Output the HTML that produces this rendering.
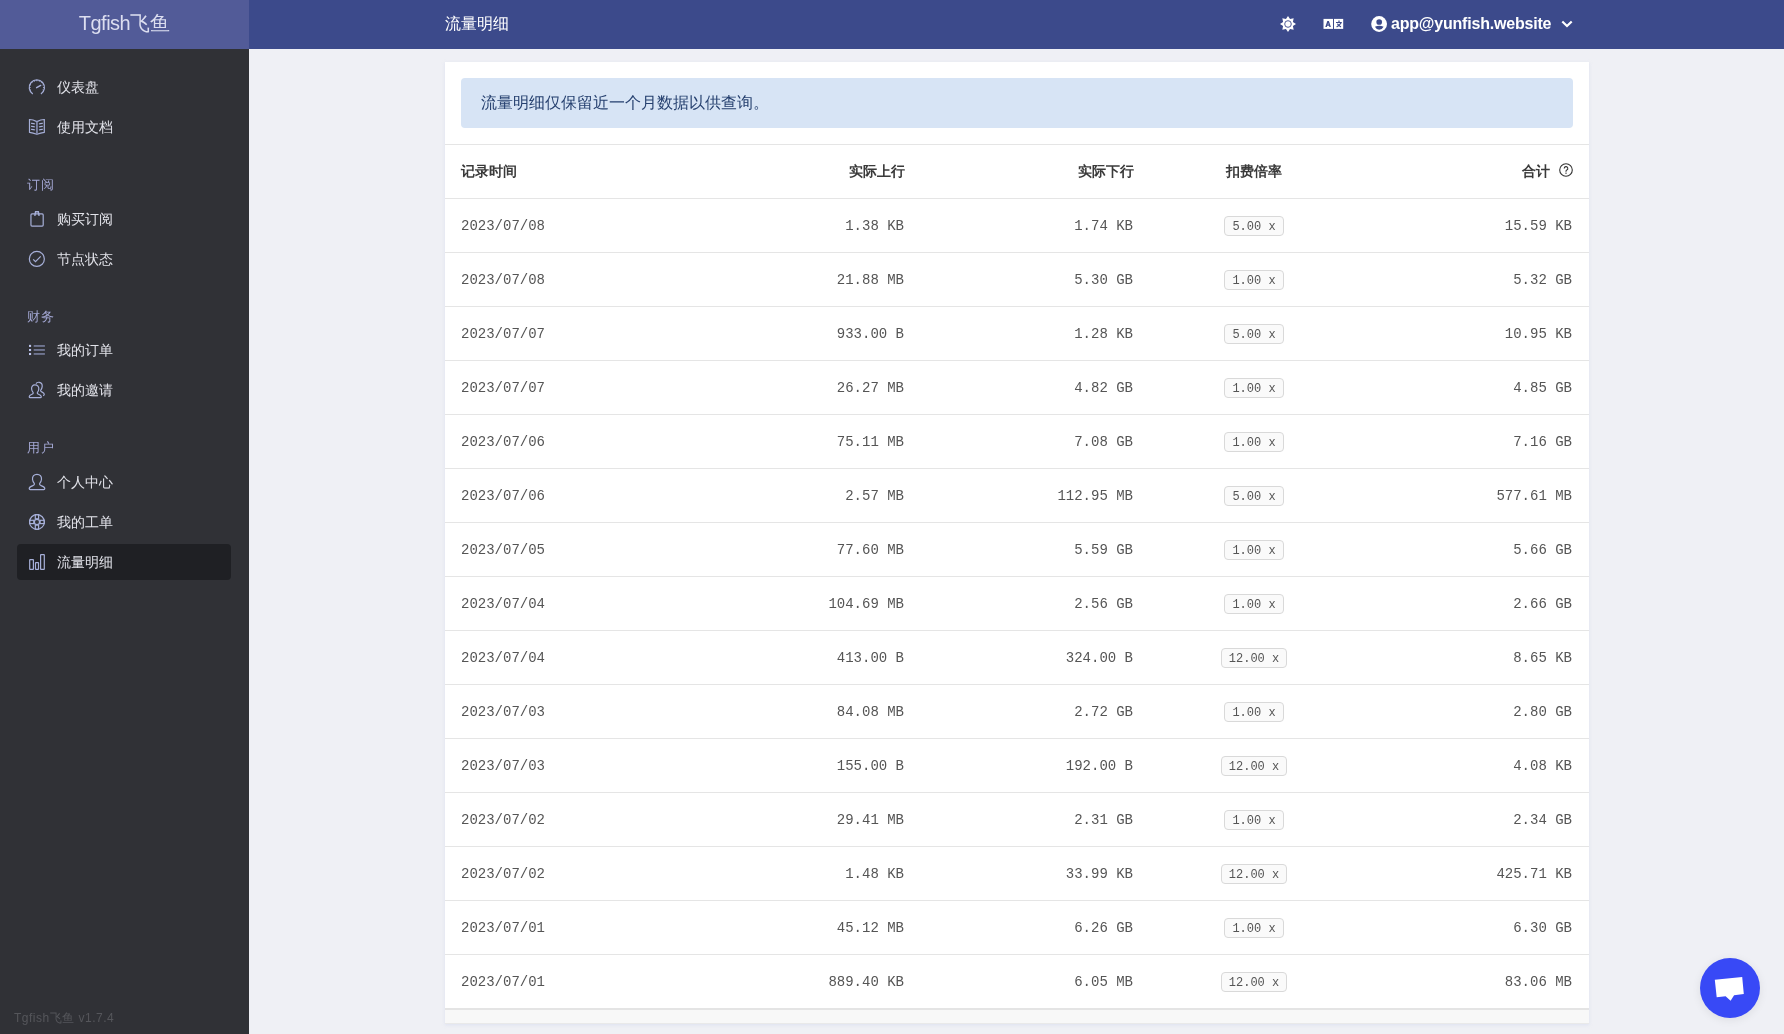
<!DOCTYPE html>
<html><head><meta charset="utf-8">
<style>
*{box-sizing:border-box;margin:0;padding:0}
html,body{will-change:transform;width:1784px;height:1034px;overflow:hidden;background:#eff0f5;font-family:"Liberation Sans",sans-serif;}
#sidebar{position:absolute;left:0;top:0;width:249px;height:1034px;background:#303136;}
#logo{position:absolute;left:0;top:0;width:249px;height:49px;background:#525b98;color:#dcdef0;font-size:20px;line-height:47px;text-align:center;}
#header{position:absolute;left:249px;top:0;width:1535px;height:49px;background:#3c4a8b;}
#email{position:absolute;left:1142px;top:0;line-height:47px;font-size:16px;font-weight:bold;color:#fff;letter-spacing:-0.2px}
#title{position:absolute;left:196px;top:0;line-height:47px;font-size:16px;color:#fff;}
.nav{position:absolute;left:17px;width:214px;height:36px;border-radius:4px;}
.nav.active{background:#1f2024;}
.nav svg{position:absolute;left:9px;top:7px;width:22px;height:22px;}
.nav span{position:absolute;left:40px;top:0;line-height:36px;font-size:14px;color:#e2e3ea;}
.heading{position:absolute;left:27px;font-size:13px;letter-spacing:0.5px;color:#a3a7d3;line-height:14px;}
#ver{position:absolute;left:14px;top:1011px;font-size:12px;letter-spacing:.5px;color:#55565b;line-height:14px;}
#card{position:absolute;left:445px;top:62px;width:1144px;height:962px;background:#fff;box-shadow:0 1px 3px rgba(205,212,238,.5);}
#alert{position:absolute;left:16px;top:16px;width:1112px;height:50px;background:#d7e4f5;border-radius:4px;color:#26406f;font-size:16px;line-height:49px;padding-left:20px;}
.thead,.row{position:absolute;left:0;width:1144px;height:54px;border-top:1px solid #e5e5e5;}
.thead{top:82px;font-size:14px;color:#3a3a3a;font-weight:600;}
.thead>div{margin-top:-1px}
.row{font-family:"Liberation Mono",monospace;font-size:14px;color:#555;}
.thead>div,.row>div{position:absolute;top:0;line-height:54px;white-space:nowrap;}
.c0{left:16px}.row .c1{right:685px}.row .c2{right:456px}.thead .c1{right:684px}.thead .c2{right:455px}.c3{left:709px;width:200px;text-align:center}.row .c4{right:17px}
.thead .c4{right:16px;padding-right:23px}
.q{position:absolute;right:0;top:19px}
.badge{display:inline-block;vertical-align:middle;position:relative;top:0px;height:20px;line-height:21px;padding:0 7px;border:1px solid #d9d9d9;border-radius:4px;background:#fafafa;font-size:12px;color:#555;}
#foot{position:absolute;left:0;top:946px;width:1144px;height:16px;background:#f8f8f8;border-top:2px solid #e4e4e4;border-bottom:1px solid #e9e9e9;}
#chat{position:absolute;left:1700px;top:958px;width:60px;height:60px;border-radius:50%;background:#3849f6;box-shadow:0 2px 10px rgba(0,0,0,.08);}
</style></head><body>
<div id="sidebar">
  <div id="logo"><span style="letter-spacing:-0.5px">Tgfish</span>飞鱼</div>
  <div class="nav" style="top:69px"><svg viewBox="0 0 22 22" width="22" height="22" fill="none" stroke="#a6afd8" stroke-width="1.2"><path d="M6.8 17.9A7.6 7.6 0 1 1 14.9 17.9"/><path d="M3.83 14.41L5.03 13.91M3.25 11.50L4.55 11.50M3.83 8.59L5.03 9.09M5.48 6.13L6.40 7.05M7.94 4.48L8.44 5.68M10.85 3.90L10.85 5.20M13.76 4.48L13.26 5.68M16.22 6.13L15.30 7.05M17.87 8.59L16.67 9.09M18.45 11.50L17.15 11.50M17.87 14.41L16.67 13.91" stroke-width="1"/><path d="M10.6 11.7L14.7 9.4" stroke-width="1.4" stroke-linecap="round"/></svg><span>仪表盘</span></div>
  <div class="nav" style="top:109px"><svg viewBox="0 0 22 22" width="22" height="22" fill="none" stroke="#a6afd8" stroke-width="1.2"><path d="M3.5 3.5Q7 3.6 10.9 5.6Q14.8 3.6 18.3 3.5V16.3Q14.8 16.6 10.9 18.3Q7 16.6 3.5 16.3Z"/><path d="M10.9 5.6V18.3" stroke-width="1.9" stroke="#7c83a3"/><path d="M5.1 7.4Q7.5 7.3 8.9 8M5.1 10.4Q7.5 10.3 8.9 11M5.1 13.4Q7.5 13.3 8.9 14M16.8 7.4Q14.4 7.3 13 8M16.8 10.4Q14.4 10.3 13 11M16.8 13.4Q14.4 13.3 13 14"/></svg><span>使用文档</span></div>
  <div class="heading" style="top:178px">订阅</div>
  <div class="nav" style="top:201px"><svg viewBox="0 0 22 22" width="22" height="22" fill="none" stroke="#a6afd8" stroke-width="1.2"><rect x="4.95" y="5.9" width="12.25" height="12.2" rx="1"/><path d="M8.8 7.8L9.6 3.7H12.3L13.1 7.8" stroke-width="1.5"/></svg><span>购买订阅</span></div>
  <div class="nav" style="top:241px"><svg viewBox="0 0 22 22" width="22" height="22" fill="none" stroke="#a6afd8" stroke-width="1.2"><circle cx="10.85" cy="10.96" r="7.5"/><path d="M7.2 11.3L9.5 13.6L14.7 8.3"/></svg><span>节点状态</span></div>
  <div class="heading" style="top:310px">财务</div>
  <div class="nav" style="top:332px"><svg viewBox="0 0 22 22" width="22" height="22"><rect x="3" y="5.85" width="2.1" height="2.1" fill="#bcc4ec"/><rect x="3" y="9.95" width="2.1" height="2.1" fill="#bcc4ec"/><rect x="3" y="13.95" width="2.1" height="2.1" fill="#bcc4ec"/><rect x="7.7" y="6" width="11.2" height="1.9" fill="#6f7590"/><rect x="7.7" y="10" width="11.2" height="1.9" fill="#6f7590"/><rect x="7.7" y="14" width="11.2" height="1.9" fill="#6f7590"/></svg><span>我的订单</span></div>
  <div class="nav" style="top:372px"><svg viewBox="0 0 22 22" width="22" height="22" fill="none" stroke="#a6afd8" stroke-width="1.2"><path d="M10 4.6C10.6 3.6 11.8 3.1 13.3 3.3C15.3 3.6 16.4 5.3 16.2 7.6C16 9.4 15.3 10.5 14.6 11.3C14.5 12 14.8 12.4 15.8 12.9C17 13.5 18.3 14.3 18.3 15.3C18.3 16.2 17.8 16.5 17.1 16.6"/><path d="M8.9 5.9C6.6 5.9 5.4 7.6 5.6 10C5.8 11.8 6.5 12.9 7.2 13.7C7.4 14.5 7.1 14.9 6 15.3C4.2 16 3.2 16.7 3.2 17.7C3.2 18.4 3.6 18.6 4.3 18.6H14.3C15 18.6 15.3 18.4 15.3 17.7C15.3 16.7 14.3 16 12.5 15.3C11.4 14.9 11.1 14.5 11.3 13.7C12 12.9 12.7 11.8 12.8 10C13 7.6 11.6 5.9 8.9 5.9Z"/></svg><span>我的邀请</span></div>
  <div class="heading" style="top:441px">用户</div>
  <div class="nav" style="top:464px"><svg viewBox="0 0 22 22" width="22" height="22" fill="none" stroke="#a6afd8" stroke-width="1.2"><path d="M10.96 3.3C8 3.3 6.3 5.3 6.5 8.3C6.7 10.5 7.6 11.8 8.4 12.7C8.7 13.6 8.3 14.1 6.9 14.6C4.6 15.4 3.2 16.3 3.2 17.6C3.2 18.3 3.6 18.6 4.3 18.6H17.7C18.4 18.6 18.8 18.3 18.8 17.6C18.8 16.3 17.4 15.4 15.1 14.6C13.7 14.1 13.3 13.6 13.6 12.7C14.4 11.8 15.3 10.5 15.5 8.3C15.7 5.3 14 3.3 10.96 3.3Z"/></svg><span>个人中心</span></div>
  <div class="nav" style="top:504px"><svg viewBox="0 0 22 22" width="22" height="22" fill="none" stroke="#a6afd8" stroke-width="1.2"><circle cx="10.96" cy="10.96" r="7.4"/><circle cx="10.96" cy="10.96" r="2.6"/><rect x="9.3" y="3.6" width="3.3" height="4.2"/><rect x="9.3" y="14.1" width="3.3" height="4.2"/><rect x="3.6" y="9.3" width="4.2" height="3.3"/><rect x="14.1" y="9.3" width="4.2" height="3.3"/></svg><span>我的工单</span></div>
  <div class="nav active" style="top:544px"><svg viewBox="0 0 22 22" width="22" height="22" fill="none" stroke="#a6afd8" stroke-width="1.2"><rect x="3.7" y="8.7" width="3.7" height="9.6" rx=".4"/><rect x="9.5" y="11.6" width="3" height="6.7" rx=".4"/><rect x="14.6" y="3.6" width="3.7" height="14.7" rx=".4"/></svg><span>流量明细</span></div>
  <div id="ver">Tgfish飞鱼 v1.7.4</div>
</div>
<div id="header">
  <div id="title">流量明细</div>
  <svg id="sun" style="position:absolute;left:1029.5px;top:15px" width="18" height="18" viewBox="0 0 18 18"><path fill="#fff" d="M9.00 1.00L11.03 4.10L14.66 3.34L13.90 6.97L17.00 9.00L13.90 11.03L14.66 14.66L11.03 13.90L9.00 17.00L6.97 13.90L3.34 14.66L4.10 11.03L1.00 9.00L4.10 6.97L3.34 3.34L6.97 4.10Z"/><circle cx="9" cy="9" r="3.3" fill="#fff" stroke="#3c4a8b" stroke-width="0.9"/></svg>
  <svg id="lang" style="position:absolute;left:1074px;top:18px" width="22" height="12" viewBox="0 0 22 12"><rect x="0.5" y="0.9" width="9.5" height="10" fill="#fff"/><rect x="11" y="0.9" width="9.2" height="10" fill="#fff"/><path fill-rule="evenodd" d="M2.3 8.9L4.3 3.1H5.9L7.9 8.9H6.4L6 7.7H4.2L3.8 8.9Z M4.6 6.5H5.6L5.1 4.9Z" fill="#3c4a8b"/><path d="M13 4.5H18.8M16 2.6V4.3M18.2 4.8Q16.5 7.5 13.6 8.9M14.4 5.8Q15.8 8 18 8.9" stroke="#3c4a8b" stroke-width="1.2" fill="none"/></svg>
  <svg id="ucirc" style="position:absolute;left:1122px;top:16px" width="17" height="17" viewBox="0 0 17 17"><circle cx="8.1" cy="8" r="7.9" fill="#fff"/><circle cx="8.2" cy="6" r="2.85" fill="#3c4a8b"/><path d="M3.9 10.7Q8.2 8.7 12.6 10.7Q10.9 13.8 8.2 13.8Q5.5 13.8 3.9 10.7Z" fill="#3c4a8b"/></svg>
  <div id="email">app@yunfish.website</div>
  <svg id="chev" style="position:absolute;left:1311.5px;top:20px" width="12" height="8" viewBox="0 0 12 8"><path d="M1.3 1.5L6 6L10.7 1.5" fill="none" stroke="#fff" stroke-width="2.2"/></svg>

</div>
<div id="card">
  <div id="alert">流量明细仅保留近一个月数据以供查询。</div>
  <div class="thead"><div class="c0">记录时间</div><div class="c1">实际上行</div><div class="c2">实际下行</div><div class="c3">扣费倍率</div><div class="c4">合计<svg class="q" width="14" height="14" viewBox="0 0 14 14"><circle cx="7" cy="7" r="6.3" fill="none" stroke="#333" stroke-width="1.1"/><path d="M5.2 5.4a1.8 1.8 0 1 1 2.6 1.6c-.6.3-.8.6-.8 1.2v.5" fill="none" stroke="#333" stroke-width="1.1"/><rect x="6.4" y="9.6" width="1.2" height="1.2" fill="#333"/></svg></div></div>
<div class="row" style="top:136px"><div class="c0">2023/07/08</div><div class="c1">1.38 KB</div><div class="c2">1.74 KB</div><div class="c3"><span class="badge">5.00 x</span></div><div class="c4">15.59 KB</div></div>
<div class="row" style="top:190px"><div class="c0">2023/07/08</div><div class="c1">21.88 MB</div><div class="c2">5.30 GB</div><div class="c3"><span class="badge">1.00 x</span></div><div class="c4">5.32 GB</div></div>
<div class="row" style="top:244px"><div class="c0">2023/07/07</div><div class="c1">933.00 B</div><div class="c2">1.28 KB</div><div class="c3"><span class="badge">5.00 x</span></div><div class="c4">10.95 KB</div></div>
<div class="row" style="top:298px"><div class="c0">2023/07/07</div><div class="c1">26.27 MB</div><div class="c2">4.82 GB</div><div class="c3"><span class="badge">1.00 x</span></div><div class="c4">4.85 GB</div></div>
<div class="row" style="top:352px"><div class="c0">2023/07/06</div><div class="c1">75.11 MB</div><div class="c2">7.08 GB</div><div class="c3"><span class="badge">1.00 x</span></div><div class="c4">7.16 GB</div></div>
<div class="row" style="top:406px"><div class="c0">2023/07/06</div><div class="c1">2.57 MB</div><div class="c2">112.95 MB</div><div class="c3"><span class="badge">5.00 x</span></div><div class="c4">577.61 MB</div></div>
<div class="row" style="top:460px"><div class="c0">2023/07/05</div><div class="c1">77.60 MB</div><div class="c2">5.59 GB</div><div class="c3"><span class="badge">1.00 x</span></div><div class="c4">5.66 GB</div></div>
<div class="row" style="top:514px"><div class="c0">2023/07/04</div><div class="c1">104.69 MB</div><div class="c2">2.56 GB</div><div class="c3"><span class="badge">1.00 x</span></div><div class="c4">2.66 GB</div></div>
<div class="row" style="top:568px"><div class="c0">2023/07/04</div><div class="c1">413.00 B</div><div class="c2">324.00 B</div><div class="c3"><span class="badge">12.00 x</span></div><div class="c4">8.65 KB</div></div>
<div class="row" style="top:622px"><div class="c0">2023/07/03</div><div class="c1">84.08 MB</div><div class="c2">2.72 GB</div><div class="c3"><span class="badge">1.00 x</span></div><div class="c4">2.80 GB</div></div>
<div class="row" style="top:676px"><div class="c0">2023/07/03</div><div class="c1">155.00 B</div><div class="c2">192.00 B</div><div class="c3"><span class="badge">12.00 x</span></div><div class="c4">4.08 KB</div></div>
<div class="row" style="top:730px"><div class="c0">2023/07/02</div><div class="c1">29.41 MB</div><div class="c2">2.31 GB</div><div class="c3"><span class="badge">1.00 x</span></div><div class="c4">2.34 GB</div></div>
<div class="row" style="top:784px"><div class="c0">2023/07/02</div><div class="c1">1.48 KB</div><div class="c2">33.99 KB</div><div class="c3"><span class="badge">12.00 x</span></div><div class="c4">425.71 KB</div></div>
<div class="row" style="top:838px"><div class="c0">2023/07/01</div><div class="c1">45.12 MB</div><div class="c2">6.26 GB</div><div class="c3"><span class="badge">1.00 x</span></div><div class="c4">6.30 GB</div></div>
<div class="row" style="top:892px"><div class="c0">2023/07/01</div><div class="c1">889.40 KB</div><div class="c2">6.05 MB</div><div class="c3"><span class="badge">12.00 x</span></div><div class="c4">83.06 MB</div></div>
  <div id="foot"></div>
</div>
<div id="chat"><svg width="60" height="60" viewBox="0 0 60 60"><path d="M14.8 21.8L42.2 18.9L43.8 35.9L34.1 37.3L30.6 42.7L25.6 38.3L16.7 39.2Z" fill="#fff"/></svg></div>
</body></html>
